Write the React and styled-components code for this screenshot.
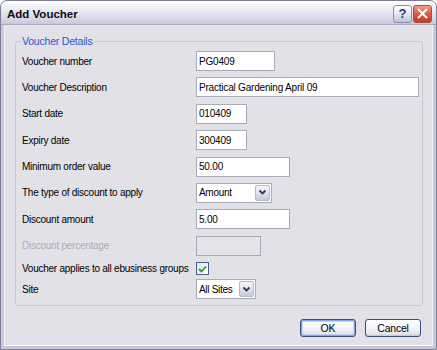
import styled, { createGlobalStyle } from "styled-components";

const GlobalStyle = createGlobalStyle`
    html, body {
        margin: 0;
        padding: 0;
        background: #ffffff;
    }
    * {
        box-sizing: border-box;
    }
`

const font = `"Liberation Sans", Arial, sans-serif`

const Window = styled.div`
    width: 437px;
    height: 350px;
    display: flex;
    flex-direction: column;
    background: #c9c9d9;
    border: 1px solid #7d7d99;
    border-radius: 7px 7px 0 0;
    padding: 0 3px 3px;
    overflow: hidden;
`
const TitleBar = styled.div`
    height: 24px;
    margin: 0 -3px;
    padding: 2px 4px 0 6px;
    display: flex;
    align-items: center;
    justify-content: space-between;
    background: linear-gradient(#ffffff 0%, #ececf3 35%, #dcdce8 70%, #c8c8d8 100%);
    border-bottom: 1px solid #a8a8bc;
`
const Title = styled.h1`
    margin: 0;
    font-family: ${font};
    font-size: 11.5px;
    font-weight: 700;
    color: #0a0a14;
`
const TitleButtons = styled.div`
    display: flex;
    gap: 1px;
`
const TitleButton = styled.div`
    width: 19px;
    height: 18px;
    border-radius: 3px;
    display: flex;
    align-items: center;
    justify-content: center;
    border: 1px solid ${p => p.$close ? "#b04a3e" : "#8e90a8"};
    background: ${p => p.$close
        ? "linear-gradient(#f39a86, #e2523b 55%, #c83a26)"
        : "linear-gradient(#ffffff, #e2e3ee 55%, #c2c4d6)"};
    color: #283c78;
    font-family: ${font};
    font-weight: 700;
    font-size: 13px;
`
const Body = styled.div`
    flex: 1;
    display: flex;
    flex-direction: column;
    background: #e2e1e7;
    padding: 10px 9px 0 10px;
    border: 1px solid #f4f4f8;
    border-top: none;
`
const Group = styled.fieldset`
    margin: 0;
    padding: 4px 0 6px 6px;
    border: 1px solid #c9c8d0;
    border-radius: 3px;
    display: flex;
    flex-direction: column;
`
const Legend = styled.legend`
    padding: 0 1px;
    margin-left: -1px;
    font-family: ${font};
    font-size: 10.5px;
    line-height: 12px;
    letter-spacing: -0.2px;
    color: #2a56d6;
`
const Row = styled.div`
    display: grid;
    grid-template-columns: 174px 1fr;
    align-items: center;
    height: ${p => p.$short ? "13px" : "20px"};
    margin-bottom: ${p => p.$last ? "0" : p.$short ? "4px" : "6.4px"};
`
const Label = styled.span`
    font-family: ${font};
    font-size: 10px;
    letter-spacing: -0.25px;
    color: ${p => p.$disabled ? "#adadb6" : "#000000"};
    white-space: nowrap;
`
const TextBox = styled.input`
    width: ${p => p.$w}px;
    height: 20px;
    margin: 0;
    padding: 0 2px;
    border: 1px solid #a5acb5;
    background: ${p => p.disabled ? "#e4e3e9" : "#ffffff"};
    font-family: ${font};
    font-size: 10px;
    letter-spacing: -0.2px;
    color: #000;
    outline: none;
`
const Select = styled.div`
    width: ${p => p.$w}px;
    height: 20px;
    display: flex;
    align-items: center;
    justify-content: space-between;
    border: 1px solid #a5acb5;
    background: #ffffff;
    padding: 1px 1px 1px 2px;
    font-family: ${font};
    font-size: 10px;
    letter-spacing: -0.3px;
    color: #000;
`
const DropButton = styled.div`
    width: 15px;
    height: 16px;
    display: flex;
    align-items: center;
    justify-content: center;
    border: 1px solid #b4b8c8;
    border-radius: 2px;
    background: linear-gradient(#f6f6fa, #dcdde8 60%, #c8cad8);
`
const CheckBox = styled.div`
    width: 13px;
    height: 13px;
    border: 1px solid #46608a;
    background: linear-gradient(135deg, #e4e4ec, #ffffff);
    display: flex;
    align-items: center;
    justify-content: center;
`
const Footer = styled.div`
    display: flex;
    justify-content: flex-end;
    gap: 9px;
    margin-top: 13px;
    padding-right: 2px;
`
const Button = styled.button`
    width: 56px;
    height: 18px;
    margin: 0;
    padding: 0;
    border: 1px solid #3c4d7a;
    border-radius: 3px;
    background: linear-gradient(#ffffff, #f2f2f6 60%, #d8d9e4);
    box-shadow: ${p => p.$default ? "inset 0 0 0 1px #8aa4e6, inset 0 0 0 2px #c4d2f4" : "inset 0 -1px 0 #c8c9d6"};
    font-family: ${font};
    font-size: 10.5px;
    letter-spacing: -0.2px;
    color: #000;
`

const Chevron = () => (
    <svg width="9" height="7" viewBox="0 0 9 7">
        <path d="M1.5 1.5 L4.5 4.5 L7.5 1.5" fill="none" stroke="#2c3a5c" strokeWidth="1.8" />
    </svg>
)

const fields = [
    { label: "Voucher number", value: "PG0409", width: 79 },
    { label: "Voucher Description", value: "Practical Gardening April 09", width: 223 },
    { label: "Start date", value: "010409", width: 51 },
    { label: "Expiry date", value: "300409", width: 51 },
    { label: "Minimum order value", value: "50.00", width: 94 },
    { label: "The type of discount to apply", select: "Amount", width: 76 },
    { label: "Discount amount", value: "5.00", width: 94 },
    { label: "Discount percentage", value: "", width: 65, disabled: true },
    { label: "Voucher applies to all ebusiness groups", checkbox: true },
    { label: "Site", select: "All Sites", width: 60 },
]

const App = () => {
    return (
        <>
        <GlobalStyle />
        <Window>
            <TitleBar>
                <Title>Add Voucher</Title>
                <TitleButtons>
                    <TitleButton>?</TitleButton>
                    <TitleButton $close>
                        <svg width="11" height="11" viewBox="0 0 11 11">
                            <path d="M1.5 1.5 L9.5 9.5 M9.5 1.5 L1.5 9.5" stroke="#ffffff" strokeWidth="2" strokeLinecap="round" />
                        </svg>
                    </TitleButton>
                </TitleButtons>
            </TitleBar>
            <Body>
                <Group>
                    <Legend>Voucher Details</Legend>
                    {
                        fields.map((field, i) => (
                            <Row key={field.label} $short={field.checkbox} $last={i === fields.length - 1}>
                                <Label $disabled={field.disabled}>{field.label}</Label>
                                {field.checkbox ? (
                                    <CheckBox>
                                        <svg width="9" height="8" viewBox="0 0 9 8">
                                            <path d="M1 4 L3.5 6.5 L8 1.5" fill="none" stroke="#21a121" strokeWidth="1.8" />
                                        </svg>
                                    </CheckBox>
                                ) : field.select ? (
                                    <Select $w={field.width}>
                                        <span>{field.select}</span>
                                        <DropButton><Chevron /></DropButton>
                                    </Select>
                                ) : (
                                    <TextBox $w={field.width} defaultValue={field.value} disabled={field.disabled} readOnly />
                                )}
                            </Row>
                        ))
                    }
                </Group>
                <Footer>
                    <Button $default>OK</Button>
                    <Button>Cancel</Button>
                </Footer>
            </Body>
        </Window>
        </>
    )
}

export default App;
